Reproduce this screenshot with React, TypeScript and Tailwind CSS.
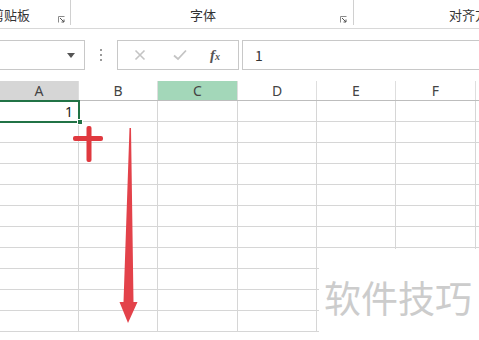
import React from "react";

const cols = [
  { label: "A", w: 79 },
  { label: "B", w: 79 },
  { label: "C", w: 80 },
  { label: "D", w: 79 },
  { label: "E", w: 79 },
  { label: "F", w: 80 },
  { label: "", w: 80 },
];

const rowCount = 11;

function Launcher() {
  return (
    <svg width="7" height="7" viewBox="0 0 7 7" className="shrink-0">
      <path d="M0.5 6.5V0.5H6.5" fill="none" stroke="#8a8a8a" strokeWidth="1" />
      <path d="M2 2L6 6M6 3.5V6H3.5" fill="none" stroke="#555" strokeWidth="1" />
    </svg>
  );
}

function Ribbon() {
  return (
    <div className="flex h-[29px] border-b border-[#d8d8d8] text-[13px] text-[#333]">
      <div className="relative w-[70px] shrink-0">
        <span className="absolute left-[-9px] top-[7px] leading-[16px]">剪贴板</span>
        <span className="absolute left-[58px] top-[16px]">
          <Launcher />
        </span>
      </div>
      <div className="w-px h-[25px] bg-[#d0d0d0]" />
      <div className="relative w-[282px] shrink-0">
        <span className="absolute left-[119px] top-[7px] leading-[16px]">字体</span>
        <span className="absolute left-[269px] top-[16px]">
          <Launcher />
        </span>
      </div>
      <div className="w-px h-[25px] bg-[#d0d0d0]" />
      <div className="relative flex-1">
        <span className="absolute left-[95px] top-[7px] leading-[16px] whitespace-nowrap">对齐方式</span>
      </div>
    </div>
  );
}

function FormulaBar() {
  return (
    <div className="flex h-[30px] mt-[11px] items-stretch">
      <div className="ml-[-1px] w-[86px] border border-[#c8c8c8] flex items-center justify-end pr-[9px]">
        <svg width="8" height="5" viewBox="0 0 8 5">
          <path d="M0 0H8L4 5Z" fill="#555" />
        </svg>
      </div>
      <div className="w-[32px] flex flex-col items-center justify-center gap-[3px]">
        <span className="w-[2px] h-[2px] bg-[#9a9a9a]" />
        <span className="w-[2px] h-[2px] bg-[#9a9a9a]" />
        <span className="w-[2px] h-[2px] bg-[#9a9a9a]" />
      </div>
      <div className="w-[122px] border border-[#c8c8c8] flex items-center">
        <svg width="12" height="12" viewBox="0 0 12 12" className="ml-[16px]">
          <path d="M1.5 1.5L10.5 10.5M10.5 1.5L1.5 10.5" stroke="#c4c4c4" strokeWidth="1.6" />
        </svg>
        <svg width="14" height="12" viewBox="0 0 14 12" className="ml-[27px]">
          <path d="M1 6.5L5 10L13 1.5" fill="none" stroke="#c4c4c4" strokeWidth="1.8" />
        </svg>
        <span
          className="ml-[23px] text-[15px] italic font-bold text-[#555]"
          style={{ fontFamily: '"Liberation Serif", serif' }}
        >
          f<span className="text-[10px]">x</span>
        </span>
      </div>
      <div className="ml-[3px] flex-1 border border-[#c8c8c8] border-r-0 flex items-center pl-[12px] text-[14px] text-[#333]">
        1
      </div>
    </div>
  );
}

function Sheet() {
  return (
    <div className="mt-[11px] flex flex-col" style={{ fontFamily: '"Noto Sans", sans-serif' }}>
      <div className="flex h-[20px] border-b border-[#bdbdbd]">
        {cols.map((c, i) => (
          <div
            key={i}
            style={{ width: c.w }}
            className={
              "shrink-0 flex items-center justify-center text-[14px] text-[#444] border-r border-[#dedede] " +
              (c.label === "A" ? "bg-[#d6d6d6]" : c.label === "C" ? "bg-[#a3d7b9]" : "bg-white")
            }
          >
            {c.label}
          </div>
        ))}
      </div>
      {Array.from({ length: rowCount }).map((_, r) => (
        <div key={r} className="flex h-[21px]">
          {cols.map((c, i) => (
            <div
              key={i}
              style={{ width: c.w }}
              className="shrink-0 border-r border-b border-[#d6d6d6]"
            />
          ))}
        </div>
      ))}
    </div>
  );
}

export default function App() {
  return (
    <div
      className="relative w-[479px] h-[340px] overflow-hidden bg-white"
      style={{ fontFamily: '"Noto Sans CJK SC", sans-serif' }}
    >
      <Ribbon />
      <FormulaBar />
      <Sheet />

      {/* active cell A1 */}
      <div
        className="absolute left-[-2px] top-[100px] w-[82px] h-[23px] border-2 border-[#217346] flex items-center justify-end pr-[5px] text-[14px] text-[#222]"
        style={{ fontFamily: '"Noto Sans", sans-serif' }}
      >
        1
      </div>
      <div className="absolute left-[77px] top-[119px] w-[6px] h-[6px] bg-[#217346] border border-white" />

      {/* watermark */}
      <div className="absolute left-[319px] top-[249px] w-[160px] h-[91px] bg-white">
        <span className="absolute left-[5px] top-[28px] text-[37px] leading-[40px] text-[#cccccc] whitespace-nowrap">
          软件技巧
        </span>
      </div>

      {/* red annotations */}
      <svg className="absolute left-0 top-0 pointer-events-none" width="479" height="340" viewBox="0 0 479 340">
        <rect x="73" y="136" width="30" height="5" rx="2" fill="#e0393f" />
        <rect x="86.5" y="126" width="5" height="36" rx="2" fill="#e0393f" />
        <path
          d="M129.5 128L131 128L133.5 302L137.5 302L128 323L119.5 302L123.5 302Z"
          fill="#e3424a"
        />
      </svg>
    </div>
  );
}
